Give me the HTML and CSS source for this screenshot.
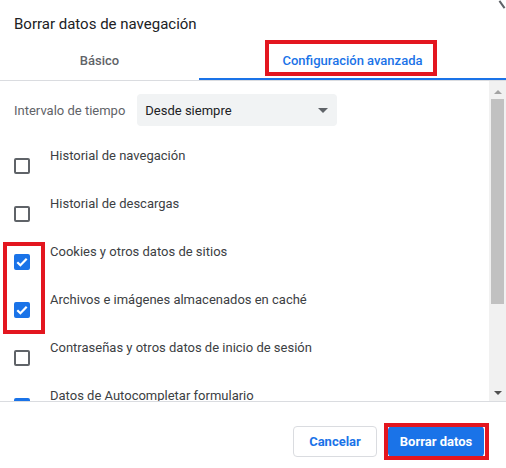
FILE: index.html
```html
<!DOCTYPE html>
<html lang="es">
<head>
  <meta charset="UTF-8" />
  <title>Borrar datos de navegación</title>
  <link rel="stylesheet" href="styles.css">
</head>
<body>
  <div class="dialog">
    <span class="close-edge"></span>
    <h1 class="title">Borrar datos de navegación</h1>

    <div class="tabs">
      <div class="tab">Básico</div>
      <div class="tab active">Configuración avanzada</div>
      <span class="mark mark-tab"></span>
    </div>

    <div class="body">
      <div class="content">
        <div class="range">
          <span class="range-label">Intervalo de tiempo</span>
          <div class="select">
            <span>Desde siempre</span>
            <span class="caret"></span>
          </div>
        </div>

        <div class="row">
          <span class="box"></span>
          <span class="label">Historial de navegación</span>
        </div>
        <div class="row">
          <span class="box"></span>
          <span class="label">Historial de descargas</span>
        </div>
        <div class="row">
          <span class="box checked">
            <svg viewBox="0 0 16 16"><path d="M3.3 8.2l3.1 3 6.3-6.4" /></svg>
          </span>
          <span class="label">Cookies y otros datos de sitios</span>
        </div>
        <div class="row">
          <span class="box checked">
            <svg viewBox="0 0 16 16"><path d="M3.3 8.2l3.1 3 6.3-6.4" /></svg>
          </span>
          <span class="label">Archivos e imágenes almacenados en caché</span>
        </div>
        <div class="row">
          <span class="box"></span>
          <span class="label">Contraseñas y otros datos de inicio de sesión</span>
        </div>
        <div class="row">
          <span class="box checked">
            <svg viewBox="0 0 16 16"><path d="M3.3 8.2l3.1 3 6.3-6.4" /></svg>
          </span>
          <span class="label">Datos de Autocompletar formulario</span>
        </div>

        <span class="mark mark-boxes"></span>
      </div>

      <div class="scrollbar">
        <span class="arrow up"></span>
        <span class="thumb"></span>
        <span class="track"></span>
        <span class="arrow down"></span>
      </div>
    </div>

    <div class="footer">
      <button class="btn">Cancelar</button>
      <button class="btn primary">Borrar datos</button>
      <span class="mark mark-btn"></span>
    </div>
  </div>
</body>
</html>
```

FILE: styles.css
```css
*, *::before, *::after {
  box-sizing: border-box;
  margin: 0;
  padding: 0;
}

body {
  font-family: Roboto, "Liberation Sans", Arial, sans-serif;
  background-color: #fff;
  color: #202124;
  width: 506px;
  height: 468px;
  overflow: hidden;
}

.dialog {
  position: relative;
  height: 468px;
  display: flex;
  flex-direction: column;
}

.close-edge {
  position: absolute;
  top: 0;
  right: 3px;
  width: 2px;
  height: 9px;
  background-color: #5f6368;
  transform: rotate(-35deg);
}

.title {
  font-size: 15px;
  font-weight: 400;
  line-height: 20px;
  padding: 14px 14px 0;
  height: 40px;
}

/* tabs */

.tabs {
  position: relative;
  display: grid;
  grid-template-columns: 199px 1fr;
  border-bottom: 1px solid #dadce0;
}

.tab {
  font-size: 13px;
  font-weight: 500;
  color: #5f6368;
  text-align: center;
  height: 40px;
  line-height: 41px;
  border-bottom: 2px solid transparent;
}

.tab.active {
  color: #1a73e8;
  border-bottom-color: #1a73e8;
}

.mark {
  position: absolute;
  border: 4px solid #e3161f;
}

.mark-tab {
  left: 265px;
  top: 0;
  width: 172px;
  height: 36px;
}

/* scroll area */

.body {
  display: flex;
  height: 321px;
  border-bottom: 1px solid #dadce0;
}

.content {
  position: relative;
  flex: 1;
  overflow: hidden;
  padding-top: 13px;
}

.range {
  display: flex;
  align-items: center;
  padding-left: 14px;
  gap: 12px;
}

.range-label {
  font-size: 13px;
  color: #5f6368;
}

.select {
  display: flex;
  align-items: center;
  justify-content: space-between;
  width: 200px;
  height: 32px;
  padding: 0 9px 0 8px;
  background-color: #f1f3f4;
  border-radius: 4px;
  font-size: 13px;
}

.caret {
  border-left: 5px solid transparent;
  border-right: 5px solid transparent;
  border-top: 5px solid #5f6368;
}

.row {
  display: flex;
  align-items: flex-start;
  height: 48px;
  padding-left: 14px;
}

.range + .row {
  margin-top: 16px;
}

.box {
  flex: none;
  width: 16px;
  height: 16px;
  margin-top: 16px;
  border: 2px solid #5f6368;
  border-radius: 2px;
}

.box.checked {
  background-color: #1a73e8;
  border-color: #1a73e8;
  display: flex;
  align-items: center;
  justify-content: center;
}

.box svg {
  flex: none;
  width: 16px;
  height: 16px;
  fill: none;
  stroke: #fff;
  stroke-width: 2.2;
}

.label {
  font-size: 13px;
  line-height: 12px;
  margin-top: 8px;
  margin-left: 20px;
  color: #3c4043;
}

.mark-boxes {
  left: 3px;
  top: 161px;
  width: 42px;
  height: 92px;
}

.scrollbar {
  width: 17px;
  background-color: #f1f1f1;
  display: flex;
  flex-direction: column;
  align-items: center;
}

.arrow {
  width: 0;
  height: 0;
  border-left: 4px solid transparent;
  border-right: 4px solid transparent;
  margin: 7px 0 6px;
}

.arrow.up {
  border-bottom: 4px solid #a3a3a3;
  margin-top: 9px;
}

.arrow.down {
  border-top: 4px solid #505050;
  margin-bottom: 6px;
}

.thumb {
  width: 13px;
  height: 205px;
  background-color: #c1c1c1;
  margin-top: -1px;
}

.track {
  flex: 1;
}

/* footer */

.footer {
  position: relative;
  display: flex;
  justify-content: flex-end;
  gap: 11px;
  padding: 24px 22px 0 0;
}

.btn {
  font-family: inherit;
  font-size: 13px;
  font-weight: 700;
  white-space: nowrap;
  width: 84px;
  height: 31px;
  padding: 0;
  border: 1px solid #dadce0;
  border-radius: 4px;
  background-color: #fff;
  color: #1a73e8;
}

.btn.primary {
  width: 96px;
  background-color: #1a73e8;
  border-color: #1a73e8;
  color: #fff;
}

.mark-btn {
  right: 17px;
  top: 21px;
  width: 105px;
  height: 37px;
}
```
